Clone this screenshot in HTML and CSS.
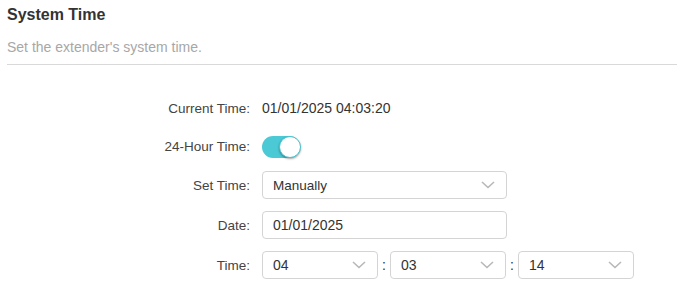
FILE: index.html
```html
<!DOCTYPE html>
<html lang="en">
<head>
  <meta charset="UTF-8">
  <meta name="viewport" content="width=device-width, initial-scale=1.0">
  <title>System Time</title>
  <link rel="stylesheet" href="styles.css">
</head>
<body>
  <div class="page">
    <!-- Intestazione -->
    <div class="head">
      <h1 class="title">System Time</h1>
      <p class="desc">Set the extender's system time.</p>
    </div>

    <!-- Modulo -->
    <div class="form">
      <div class="label">Current Time:</div>
      <div class="value num">01/01/2025 04:03:20</div>

      <div class="label">24-Hour Time:</div>
      <div class="value">
        <span class="toggle"><span class="knob"></span></span>
      </div>

      <div class="label">Set Time:</div>
      <div class="value">
        <div class="select wide">
          <span>Manually</span>
          <svg class="chev" width="14" height="8" viewBox="0 0 14 8"><path d="M1 1 L7 6.5 L13 1" fill="none" stroke="#b8b8b8" stroke-width="1.6"/></svg>
        </div>
      </div>

      <div class="label">Date:</div>
      <div class="value">
        <div class="select wide num">
          <span>01/01/2025</span>
        </div>
      </div>

      <div class="label">Time:</div>
      <div class="value times num">
        <div class="select small">
          <span>04</span>
          <svg class="chev" width="14" height="8" viewBox="0 0 14 8"><path d="M1 1 L7 6.5 L13 1" fill="none" stroke="#b8b8b8" stroke-width="1.6"/></svg>
        </div>
        <span class="colon">:</span>
        <div class="select small">
          <span>03</span>
          <svg class="chev" width="14" height="8" viewBox="0 0 14 8"><path d="M1 1 L7 6.5 L13 1" fill="none" stroke="#b8b8b8" stroke-width="1.6"/></svg>
        </div>
        <span class="colon">:</span>
        <div class="select small">
          <span>14</span>
          <svg class="chev" width="14" height="8" viewBox="0 0 14 8"><path d="M1 1 L7 6.5 L13 1" fill="none" stroke="#b8b8b8" stroke-width="1.6"/></svg>
        </div>
      </div>
    </div>
  </div>
</body>
</html>
```

FILE: styles.css
```css
body {
  margin: 0;
  background-color: #ffffff;
  font-family: "Liberation Sans", Arial, sans-serif;
  color: #333333;
}
.page {
  padding: 4px 12px 0 7px;
}
/* Intestazione */
.head {
  border-bottom: 1px solid #d9d9d9;
  padding-bottom: 7px;
}
.title {
  margin: 0;
  font-size: 16px;
  line-height: 22px;
  font-weight: bold;
  color: #333333;
}
.desc {
  margin: 11px 0 0 0;
  font-size: 14px;
  line-height: 20px;
  color: #a7a7a7;
}
/* Modulo */
.form {
  display: grid;
  grid-template-columns: 243px 1fr;
  grid-template-rows: 28px 25px 28px 28px 28px;
  column-gap: 12px;
  row-gap: 12px;
  margin-top: 29px;
  font-size: 13.5px;
}
.label {
  display: flex;
  align-items: center;
  justify-content: flex-end;
  color: #444444;
}
.value {
  display: flex;
  align-items: center;
  color: #333333;
}
.num {
  font-size: 14px;
}
.toggle {
  display: inline-block;
  width: 38px;
  height: 22px;
  border-radius: 11px;
  background-color: #4bc9d5;
  position: relative;
}
.knob {
  position: absolute;
  right: -1px;
  top: 0;
  width: 22px;
  height: 22px;
  border-radius: 50%;
  background-color: #ffffff;
  box-shadow: 0 1px 2px rgba(0, 0, 0, 0.35);
  box-sizing: border-box;
  border: 1px solid #46c3cf;
}
.select {
  box-sizing: border-box;
  height: 28px;
  border: 1px solid #d4d4d4;
  border-radius: 4px;
  display: flex;
  align-items: center;
  justify-content: space-between;
  padding: 0 11px 0 10px;
}
.wide {
  width: 245px;
}
.small {
  width: 116px;
}
.colon {
  width: 12px;
  text-align: center;
}
```
